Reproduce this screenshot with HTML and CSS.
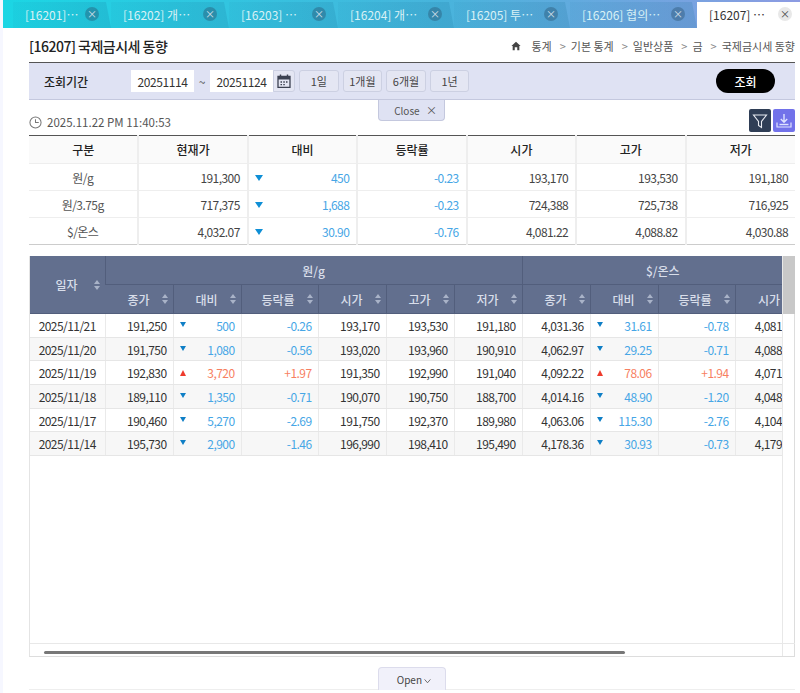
FILE: index.html

```html
<!DOCTYPE html>
<html>
<head>
<meta name="viewport" content="width=device-width, initial-scale=1">
<link rel="stylesheet" href="styles.css">
<title>[16207] 국제금시세 동향</title>
</head>
<body>

<div class="tabs">
    <div class="tab"><span>[16201]…</span><i class="tab_close">×</i></div>
    <div class="tab"><span>[16202] 개…</span><i class="tab_close">×</i></div>
    <div class="tab"><span>[16203] …</span><i class="tab_close">×</i></div>
    <div class="tab"><span>[16204] 개…</span><i class="tab_close">×</i></div>
    <div class="tab"><span>[16205] 투…</span><i class="tab_close">×</i></div>
    <div class="tab"><span>[16206] 협의…</span><i class="tab_close">×</i></div>
    <div class="tab active"><span>[16207] …</span><i class="tab_close">×</i></div>
</div>

<div class="page">
    <div class="title_row">
        <h1>[16207] 국제금시세 동향</h1>
        <div class="crumbs">
            <svg class="home" viewBox="0 0 12 12"><path d="M6 1 L11.5 6 L10 6 L10 11 L7.5 11 L7.5 7.5 L4.5 7.5 L4.5 11 L2 11 L2 6 L0.5 6 Z" fill="#444"/></svg>
            <span>통계</span><b>&gt;</b><span>기본 통계</span><b>&gt;</b><span>일반상품</span><b>&gt;</b><span>금</span><b>&gt;</b><span>국제금시세 동향</span>
        </div>
    </div>

    <div class="search_bar">
        <label class="search_label">조회기간</label>
        <input class="date_input" type="text" value="20251114">
        <span class="tilde">~</span>
        <input class="date_input date_to" type="text" value="20251124">
        <button class="cal_btn">
            <svg viewBox="0 0 14 14" width="14" height="14"><path d="M1 2.5 H13 V13.5 H1 Z" fill="none" stroke="#3c4252" stroke-width="1.3"/><path d="M1 2.5 H13 V5.5 H1 Z" fill="#3c4252"/><path d="M3.5 0.5 V3 M10.5 0.5 V3" stroke="#3c4252" stroke-width="1.4"/><path d="M3.5 8 H5 M6.3 8 H7.8 M9 8 H10.5 M3.5 10.7 H5 M6.3 10.7 H7.8" stroke="#3c4252" stroke-width="1.3"/></svg>
        </button>
        <div class="period_btns">
            <button class="period_btn">1일</button>
            <button class="period_btn">1개월</button>
            <button class="period_btn">6개월</button>
            <button class="period_btn">1년</button>
        </div>
        <button class="search_btn">조회</button>
    </div>

    <div class="time_row">
        <button class="close_panel">Close <span class="close_x">×</span></button>
        <div class="clock_text">
            <svg viewBox="0 0 14 14" width="13" height="13"><circle cx="7" cy="7" r="6" fill="none" stroke="#777" stroke-width="1.1"/><path d="M7 3.5 V7 H10.5" fill="none" stroke="#777" stroke-width="1.1"/></svg>
            <span>2025.11.22 PM 11:40:53</span>
        </div>
        <div class="tools">
            <button class="tool_btn filter_btn">
                <svg viewBox="0 0 16 16" width="16" height="16"><path d="M1.5 2 H14.5 L9.5 8.5 V14.5 L6.5 12.5 V8.5 Z" fill="none" stroke="#e8ebf2" stroke-width="1.1"/></svg>
            </button>
            <button class="tool_btn down_btn">
                <svg viewBox="0 0 16 16" width="16" height="16"><path d="M8 1 V9 M4.8 6 L8 9.3 L11.2 6" fill="none" stroke="#dfe3ff" stroke-width="1.4"/><path d="M1 9.5 V14 H15 V9.5" fill="none" stroke="#dfe3ff" stroke-width="1.2"/><path d="M3.5 11.5 H12.5" stroke="#dfe3ff" stroke-width="1.4"/></svg>
            </button>
        </div>
    </div>

    <table class="summary">
        <tr><th>구분</th><th>현재가</th><th>대비</th><th>등락률</th><th>시가</th><th>고가</th><th>저가</th></tr>
        <tr>
            <td class="center">원/g</td><td>191,300</td>
            <td class="blue"><div class="change"><i class="arrow_big"></i>450</div></td>
            <td class="blue">-0.23</td><td>193,170</td><td>193,530</td><td>191,180</td>
        </tr>
        <tr>
            <td class="center">원/3.75g</td><td>717,375</td>
            <td class="blue"><div class="change"><i class="arrow_big"></i>1,688</div></td>
            <td class="blue">-0.23</td><td>724,388</td><td>725,738</td><td>716,925</td>
        </tr>
        <tr>
            <td class="center">$/온스</td><td>4,032.07</td>
            <td class="blue"><div class="change"><i class="arrow_big"></i>30.90</div></td>
            <td class="blue">-0.76</td><td>4,081.22</td><td>4,088.82</td><td>4,030.88</td>
        </tr>
    </table>

    <div class="grid_box">
        <div class="grid_view">
            <table class="grid">
                <colgroup>
                    <col class="w75"><col class="w68"><col class="w68"><col class="w77"><col class="w68"><col class="w68"><col class="w68"><col class="w68"><col class="w68"><col class="w77"><col class="w68">
                </colgroup>
                <thead>
                    <tr>
                        <th rowspan="2"><div class="th_in th_date">일자<i class="sort"></i></div></th>
                        <th colspan="6" class="group">원/g</th>
                        <th colspan="4" class="group">$/온스</th>
                    </tr>
                    <tr>
                        <th><div class="th_in">종가<i class="sort"></i></div></th>
                        <th><div class="th_in">대비<i class="sort"></i></div></th>
                        <th><div class="th_in">등락률<i class="sort"></i></div></th>
                        <th><div class="th_in">시가<i class="sort"></i></div></th>
                        <th><div class="th_in">고가<i class="sort"></i></div></th>
                        <th><div class="th_in">저가<i class="sort"></i></div></th>
                        <th><div class="th_in">종가<i class="sort"></i></div></th>
                        <th><div class="th_in">대비<i class="sort"></i></div></th>
                        <th><div class="th_in">등락률<i class="sort"></i></div></th>
                        <th><div class="th_in">시가<i class="sort"></i></div></th>
                    </tr>
                </thead>
                <tbody>
                    <tr>
                        <td class="center">2025/11/21</td><td>191,250</td>
                        <td class="blue"><div class="change"><i class="arrow_down"></i>500</div></td>
                        <td class="blue">-0.26</td><td>193,170</td><td>193,530</td><td>191,180</td><td>4,031.36</td>
                        <td class="blue"><div class="change"><i class="arrow_down"></i>31.61</div></td>
                        <td class="blue">-0.78</td><td>4,081.22</td>
                    </tr>
                    <tr>
                        <td class="center">2025/11/20</td><td>191,750</td>
                        <td class="blue"><div class="change"><i class="arrow_down"></i>1,080</div></td>
                        <td class="blue">-0.56</td><td>193,020</td><td>193,960</td><td>190,910</td><td>4,062.97</td>
                        <td class="blue"><div class="change"><i class="arrow_down"></i>29.25</div></td>
                        <td class="blue">-0.71</td><td>4,088.82</td>
                    </tr>
                    <tr>
                        <td class="center">2025/11/19</td><td>192,830</td>
                        <td class="red"><div class="change"><i class="arrow_up"></i>3,720</div></td>
                        <td class="red">+1.97</td><td>191,350</td><td>192,990</td><td>191,040</td><td>4,092.22</td>
                        <td class="red"><div class="change"><i class="arrow_up"></i>78.06</div></td>
                        <td class="red">+1.94</td><td>4,071.10</td>
                    </tr>
                    <tr>
                        <td class="center">2025/11/18</td><td>189,110</td>
                        <td class="blue"><div class="change"><i class="arrow_down"></i>1,350</div></td>
                        <td class="blue">-0.71</td><td>190,070</td><td>190,750</td><td>188,700</td><td>4,014.16</td>
                        <td class="blue"><div class="change"><i class="arrow_down"></i>48.90</div></td>
                        <td class="blue">-1.20</td><td>4,048.50</td>
                    </tr>
                    <tr>
                        <td class="center">2025/11/17</td><td>190,460</td>
                        <td class="blue"><div class="change"><i class="arrow_down"></i>5,270</div></td>
                        <td class="blue">-2.69</td><td>191,750</td><td>192,370</td><td>189,980</td><td>4,063.06</td>
                        <td class="blue"><div class="change"><i class="arrow_down"></i>115.30</div></td>
                        <td class="blue">-2.76</td><td>4,104.40</td>
                    </tr>
                    <tr>
                        <td class="center">2025/11/14</td><td>195,730</td>
                        <td class="blue"><div class="change"><i class="arrow_down"></i>2,900</div></td>
                        <td class="blue">-1.46</td><td>196,990</td><td>198,410</td><td>195,490</td><td>4,178.36</td>
                        <td class="blue"><div class="change"><i class="arrow_down"></i>30.93</div></td>
                        <td class="blue">-0.73</td><td>4,179.80</td>
                    </tr>
                </tbody>
            </table>
        </div>
        <div class="vscroll"><div class="vthumb"></div></div>
        <div class="hscroll"><div class="hthumb"></div></div>
        <div class="corner"></div>
    </div>

    <div class="open_row">
        <button class="open_panel">Open <svg viewBox="0 0 8 6" width="7" height="5"><path d="M0.5 0.5 L4 4.5 L7.5 0.5" fill="none" stroke="#555" stroke-width="1"/></svg></button>
    </div>
</div>

</body>
</html>
```

FILE: styles.css

```css
body {
    margin: 0;
    height: 693px;
    overflow: hidden;
    background-color: #f6f7ff;
    color: #333;
    font-family: "Noto Sans CJK KR", "Noto Sans", sans-serif;
    font-size: 12px;
}

button, input {
    font-family: inherit;
}

/* top tabs */
.tabs {
    display: flex;
    height: 28px;
    margin-left: 3px;
    padding-left: 10px;
    box-sizing: border-box;
    padding-top: 2px;
    background-image: linear-gradient(to right, #1bd6e4, #48b4dc 55%, #8d9be2);
}

.tab {
    display: flex;
    align-items: center;
    box-sizing: border-box;
    padding: 0 8px 2px 12px;
    color: #d8f1f5;
    font-size: 12px;
    background-image: linear-gradient(to right, rgba(20,110,150,0.06), rgba(20,110,150,0.18));
    clip-path: polygon(0 0, calc(100% - 5px) 0, 100% 100%, 0 100%);
}

.tab:nth-child(1) { width: 98px; }
.tab:nth-child(2) { width: 118px; }
.tab:nth-child(3) { width: 109px; }
.tab:nth-child(4) { width: 116px; }
.tab:nth-child(5) { width: 116px; }
.tab:nth-child(6) { width: 127px; }

.tab span {
    white-space: nowrap;
}

.tab_close {
    width: 14px;
    height: 14px;
    margin-left: auto;
    margin-right: 4px;
    border-radius: 50%;
    background-color: rgba(40,80,110,0.4);
    color: #d4e0ea;
    font-style: normal;
    font-size: 10px;
    line-height: 13px;
    text-align: center;
}

.tab.active {
    width: 103px;
    background: white;
    color: #333;
    clip-path: none;
}

.tab.active .tab_close {
    margin-right: 0;
    background-color: #e8e8e8;
    color: #444;
}

/* page */
.page {
    margin-left: 3px;
    padding-left: 26px;
    height: 665px;
    background-color: white;
    position: relative;
}

.title_row {
    display: flex;
    justify-content: space-between;
    align-items: center;
    box-sizing: border-box;
    width: 766px;
    height: 34px;
    padding-top: 2px;
    white-space: nowrap;
}

.title_row h1 {
    margin: 0;
    font-size: 14px;
    font-weight: 500;
    color: #222;
    letter-spacing: -0.5px;
}

.crumbs {
    display: flex;
    align-items: center;
    font-size: 11px;
    color: #555;
}

.crumbs .home {
    width: 10px;
    height: 10px;
    margin-right: 10px;
}

.crumbs b {
    margin: 0 5px 0 8px;
    font-weight: normal;
    color: #888;
}

.search_bar {
    display: flex;
    align-items: center;
    box-sizing: border-box;
    width: 766px;
    height: 38px;
    padding: 0 20px 0 15px;
    background-color: #dfe2f3;
    border-top: 1px solid #555;
    border-bottom: 1px solid #c4c8de;
}

.search_label {
    width: 87px;
    font-weight: 500;
    color: #222;
}

.date_input {
    box-sizing: border-box;
    width: 63px;
    height: 22px;
    padding: 0;
    border: none;
    background: white;
    color: #333;
    font-size: 12px;
    text-align: center;
    letter-spacing: -0.4px;
}

.tilde {
    width: 16px;
    text-align: center;
    color: #555;
}

.cal_btn {
    display: flex;
    align-items: center;
    justify-content: center;
    box-sizing: border-box;
    width: 22px;
    height: 22px;
    padding: 0;
    border: 1px solid #ccd0e2;
    border-radius: 0 3px 3px 0;
    background: #e4e6f3;
}

.period_btns {
    display: flex;
    gap: 4px;
    margin-left: 4px;
}

.period_btn {
    box-sizing: border-box;
    width: 39.6px;
    height: 22px;
    padding: 0;
    border: 1px solid #ccd0e2;
    border-radius: 3px;
    background: #e4e6f3;
    color: #444;
    font-size: 11px;
}

.search_btn {
    width: 59px;
    height: 24px;
    margin-left: auto;
    border: none;
    border-radius: 12px;
    background: black;
    color: white;
    font-size: 12px;
    font-weight: 500;
}

.time_row {
    display: flex;
    justify-content: space-between;
    align-items: flex-end;
    width: 766px;
    height: 35px;
    padding-bottom: 3px;
    box-sizing: border-box;
    position: relative;
}

.close_panel {
    position: absolute;
    top: 0;
    left: 349px;
    width: 67px;
    height: 21px;
    padding: 0 0 0 8px;
    border: 1px solid #c4c8de;
    border-top: none;
    border-radius: 0 0 4px 4px;
    background: #dfe2f3;
    color: #555;
    font-size: 10px;
}

.close_x {
    margin-left: 4px;
    font-size: 11px;
}

.clock_text {
    display: flex;
    align-items: center;
    gap: 5px;
    margin-bottom: 2px;
    color: #555;
    font-size: 11.5px;
}

.tools {
    display: flex;
    gap: 2px;
}

.tool_btn {
    display: flex;
    align-items: center;
    justify-content: center;
    width: 22px;
    height: 23px;
    padding: 0;
    border: none;
    border-radius: 2px;
}

.filter_btn {
    background: #2f3e56;
}

.down_btn {
    background: #7272ea;
}

/* tables */
table {
    border-collapse: collapse;
    table-layout: fixed;
}

td {
    padding: 0 6px;
    text-align: right;
    white-space: nowrap;
    letter-spacing: -0.55px;
}

td.center {
    text-align: center;
}

.blue {
    color: #46a6e6;
}

.red {
    color: #f77f62;
}

.change {
    display: flex;
    justify-content: space-between;
    align-items: center;
}

.summary {
    width: 766px;
    border-top: 1px solid #555;
    border-bottom: 1px solid #ccc;
}

.summary th {
    height: 27px;
    padding: 0;
    background-color: #fafafa;
    border-left: 2px solid #eee;
    font-size: 12px;
    font-weight: 500;
    color: #222;
}

.summary td {
    height: 27px;
    padding: 0 7px 0 6px;
    box-sizing: border-box;
    border-top: 1px solid #eee;
    border-left: 2px solid #eee;
    color: #444;
}

.summary td.blue {
    color: #46a6e6;
}

.summary td.center {
    color: #555;
}

.summary th:first-child, .summary td:first-child {
    border-left: none;
}

.arrow_big {
    width: 0;
    height: 0;
    margin-top: 1px;
    border-left: 4.5px solid transparent;
    border-right: 4.5px solid transparent;
    border-top: 6px solid #0f8fd6;
}

.arrow_down {
    width: 0;
    height: 0;
    margin-bottom: 2px;
    border-left: 3px solid transparent;
    border-right: 3px solid transparent;
    border-top: 5px solid #0f7fc6;
}

.arrow_up {
    width: 0;
    height: 0;
    border-left: 3px solid transparent;
    border-right: 3px solid transparent;
    border-bottom: 6px solid #ee3b2c;
}

.grid_box {
    display: grid;
    grid-template-columns: 752px 13px;
    grid-template-rows: 387px 13px;
    width: 766px;
    height: 401px;
    box-sizing: border-box;
    margin-top: 11px;
    border-right: 1px solid #ddd;
    border-bottom: 1px solid #ddd;
    border-left: 1px solid #e4e4e4;
}

.grid_view {
    overflow: hidden;
}

.grid {
    width: 773px;
}

.w75 { width: 75px; }
.w68 { width: 68px; }
.w77 { width: 77px; }

.grid th {
    height: 28px;
    padding: 0;
    background-color: #626f8e;
    border-left: 1px solid #525e7c;
    border-bottom: 1px solid #525e7c;
    color: #d9deea;
    font-size: 12px;
    font-weight: 500;
}

.grid th:first-child {
    border-left: none;
}

.th_in {
    display: flex;
    justify-content: flex-end;
    align-items: center;
    gap: 12px;
    padding-right: 5px;
}

.th_date {
    gap: 16px;
}

.sort {
    display: flex;
    flex-direction: column;
    gap: 2px;
}

.sort::before {
    content: "";
    border-left: 3px solid transparent;
    border-right: 3px solid transparent;
    border-bottom: 4px solid #a9b3c8;
}

.sort::after {
    content: "";
    border-left: 3px solid transparent;
    border-right: 3px solid transparent;
    border-top: 4px solid #a9b3c8;
}

.grid td {
    height: 23.7px;
    box-sizing: border-box;
    border-left: 1px solid #eaeaea;
    border-bottom: 1px solid #e6e6e6;
    color: #333;
}

.grid td:first-child {
    border-left: none;
}

.grid td.blue {
    color: #46a6e6;
}

.grid td.red {
    color: #f77f62;
}

.grid tbody tr:nth-child(even) td {
    background-color: #f7f7f7;
}

.vscroll {
    border-left: 1px solid #e8e8e8;
}

.vthumb {
    height: 58px;
    background-color: #c8c8c8;
}

.hscroll {
    border-top: 1px solid #e8e8e8;
    padding: 7px 0 0 14px;
}

.hthumb {
    width: 581px;
    height: 3px;
    border-radius: 2px;
    background-color: #777;
}

.corner {
    border-left: 1px solid #e8e8e8;
    border-top: 1px solid #e8e8e8;
}

.open_row {
    display: flex;
    justify-content: center;
    width: 766px;
    margin-top: 10px;
    height: 23px;
    box-sizing: border-box;
    border-bottom: 1px solid #eee;
}

.open_panel {
    width: 68px;
    height: 23px;
    padding: 0 0 0 4px;
    border: 1px solid #dcdcec;
    border-bottom: none;
    border-radius: 4px 4px 0 0;
    background: #f1f1fa;
    color: #444;
    font-size: 10px;
}
```
